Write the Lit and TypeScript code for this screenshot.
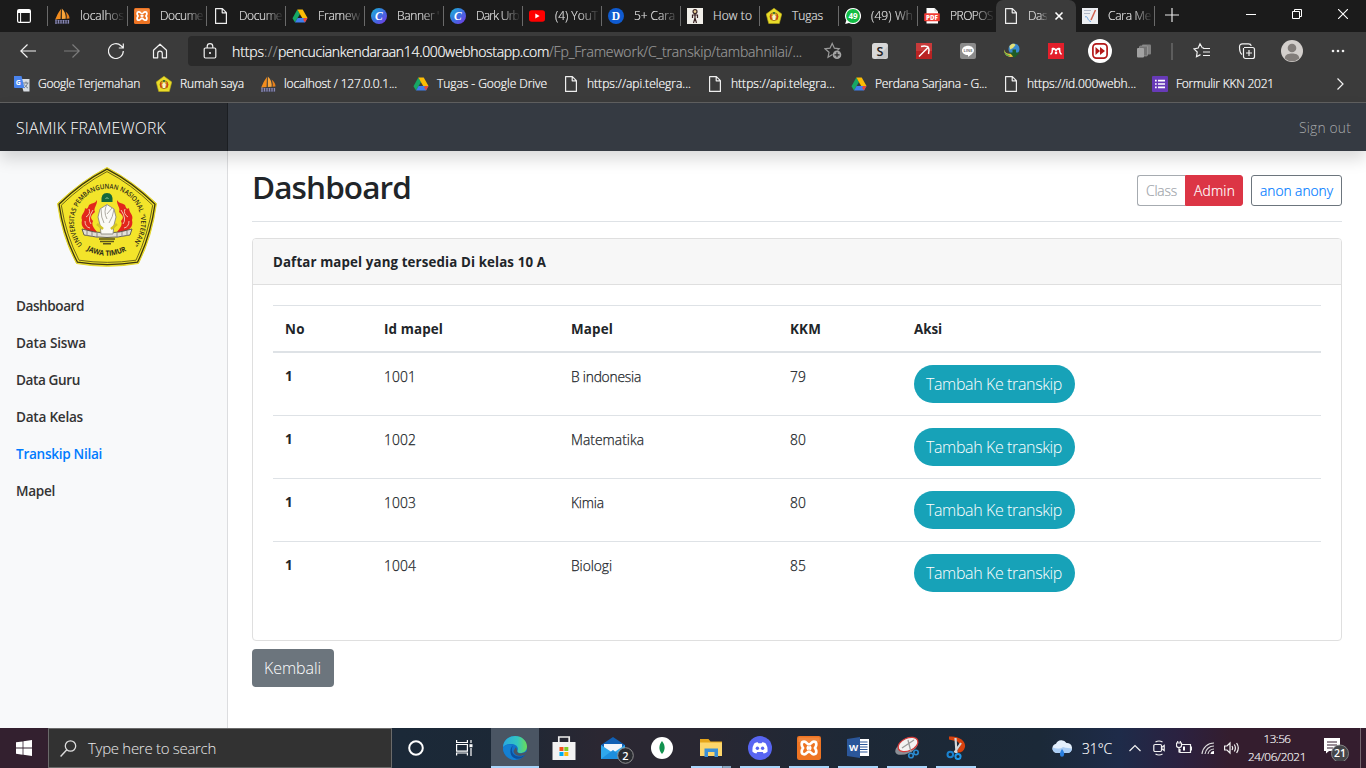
import { LitElement, html, svg, css, TemplateResult } from "lit";
import { customElement } from "lit/decorators.js";

/** Text run whose tracking is computed so that it fills `w` pixels. */
const t = (text: string, w: number, cls = "") =>
  html`<span class="fit ${cls}" data-w=${w}>${text}</span>`;

const ic = (w: number, h: number, body: unknown, cls = "") =>
  html`<svg class="ic ${cls}" width=${w} height=${h} viewBox="0 0 ${w} ${h}">${body}</svg>`;

const sails = () => ic(16, 16, svg`
  <path d="M7 1 6.600 11 1.200 11.500C2.800 8 4 4.500 7 1Z" fill="#f28c1e"/><path d="M7.800 .500C11 3.500 12 7 11.700 10.800L7.800 11Z" fill="#f9a53a"/>
  <path d="M11.500 3.500C14.500 6 15.500 8 15.500 10.500L12.500 10.800C13 8 12.600 6 11.500 3.500Z" fill="#e8801a"/>
  <path d="M1 12.800H15M1 15H15" stroke="#55557f" stroke-width="1.100"/><path d="M2 11.600V16M4.500 12V15.500M7 12V15.500M9.500 12V15.500M12 12V15.500M14.500 12V15.500" stroke="#8a8ab5" stroke-width="1.200"/>`);
const xamppAt = (s: number) => html`<svg class="ic" width=${s} height=${s} viewBox="0 0 16 16">
  <rect width="16" height="16" rx="1.500" fill="#ee7423"/><path d="M1 1H15V4H1Z" fill="#f79a55" opacity=".5"/>
  <path d="M4.800 3.800C6.500 3.800 6.500 5.600 8 5.600S9.500 3.800 11.200 3.800C13.300 3.800 13.300 6.200 12 8C13.300 9.800 13.300 12.200 11.200 12.200C9.500 12.200 9.500 10.400 8 10.400S6.500 12.200 4.800 12.200C2.700 12.200 2.700 9.800 4 8C2.700 6.200 2.700 3.800 4.800 3.800Z" fill="none" stroke="#fff" stroke-width="1.800"/>
  <path d="M6.600 7 9.400 9M9.400 7 6.600 9" stroke="#fff" stroke-width="1.500"/></svg>`;
const xampp = () => xamppAt(16);
const page = () => ic(16, 16, svg`<path d="M2.600.600H9.400L13.400 4.600V15.400H2.600ZM9.200.600V4.800H13.400" fill="none" stroke="#eee" stroke-width="1.200" stroke-linejoin="round"/>`);
const drive = () => ic(16, 16, svg`<path d="M5.300 1.500 8 6 3 14.500 .500 10.200Z" fill="#16a765"/><path d="M5.300 1.500H10.700L15.500 10H10.200Z" fill="#fbbc05"/><path d="M5.600 10H15.500L13 14.500H3Z" fill="#3f7eed"/><path d="M12.500 10H15.500L13 14.500 11 11.500Z" fill="#e8453c"/>`);
const dee = () => ic(16, 16, svg`<circle cx="8" cy="8" r="8" fill="#0f5bd0"/><text x="8" y="11.800" text-anchor="middle" font-family="Liberation Serif, serif" font-weight="700" font-size="11.500" fill="#fff">D</text>`);
const canva = () => ic(16, 16, svg`<circle cx="8" cy="8" r="8" fill="url(#cg)"/><defs><linearGradient id="cg" x1="0" y1="0" x2="1" y2="1"><stop offset="0" stop-color="#18b9d8"/><stop offset=".5" stop-color="#3d6fe0"/><stop offset="1" stop-color="#7a34e6"/></linearGradient></defs><text x="7.800" y="12" text-anchor="middle" font-family="Liberation Serif, serif" font-style="italic" font-weight="700" font-size="11.500" fill="#fff">C</text>`);
const youtube = () => ic(16, 16, svg`<rect y="2.300" width="16" height="11.500" rx="2.800" fill="#f00"/><path d="M6.300 5.500 10.600 8 6.300 10.500Z" fill="#fff"/>`);
const stick = () => ic(16, 16, svg`<rect width="16" height="16" fill="#f1efe9"/><circle cx="8" cy="3.600" r="2" fill="#f1d79a" stroke="#3a2424" stroke-width="1.200"/><path d="M8 6V10L6.500 15M8 10 9.500 15M5.500 10V7H10.500V10" fill="none" stroke="#3a2424" stroke-width="1.200"/>`);
const crest = () => ic(16, 16, svg`<path d="M8 .300 15.800 6 13.300 15.500H2.700L.200 6Z" fill="#e9dc2a" stroke="#b8a915" stroke-width=".6"/><circle cx="8" cy="8.600" r="4" fill="#d9b62a" stroke="#a8761c" stroke-width="1"/><path d="M5.200 6.500Q3.800 9 5.500 11.500M10.800 6.500Q12.200 9 10.500 11.500" fill="none" stroke="#d03c1c" stroke-width="1.500"/><path d="M8 6 9.700 8.500 9 12H7L6.300 8.500Z" fill="#f6efd6"/><circle cx="8" cy="5" r="1" fill="#186b3c"/>`);
const whats = () => ic(16, 16, svg`<path d="M8 0A8 8 0 1 1 4 14.900L.200 15.900 1.300 12.300A8 8 0 0 1 8 0Z" fill="#fff"/><circle cx="8" cy="8" r="6.900" fill="#12bd45"/><text x="8" y="11" text-anchor="middle" font-family="Open Sans, sans-serif" font-weight="700" font-size="8" fill="#fff">49</text>`);
const pdf = () => ic(16, 16, svg`<path d="M2.500 0H10.500L14 3.500V15.500H2.500Z" fill="#fff"/><path d="M10.500 0V3.500H14" fill="#d0d0d0"/><rect x=".200" y="5.200" width="15.600" height="8" rx=".8" fill="#f23c34"/><text x="8" y="11.500" text-anchor="middle" font-family="Open Sans, sans-serif" font-weight="800" font-size="6.200" fill="#fff">PDF</text>`);
const note = () => ic(16, 16, svg`<rect width="16" height="16" fill="#eceef2"/><path d="M2 2.500H9M2 5.500H8" stroke="#b0b7c6"/><path d="M13.500 2 9 12" stroke="#d0604e" stroke-width="1.500"/><path d="M3 9C6 7 5 13 9 13.500" stroke="#6aa2dc" fill="none"/>`);
const translate = () => ic(16, 16, svg`<path d="M6 3H15.500V15.500H9.500Z" fill="#d9dde3"/><path d="M9 7H14.500M12 5.500V7M13.500 7C13 9.500 11.500 11 10 12M10.500 8.500C11.500 10.500 12.500 11.300 14 12" stroke="#6b7686" fill="none" stroke-width=".9"/><path d="M0 0H7.500L10.500 12H1A1 1 0 0 1 0 11Z" fill="#4a84ee"/><text x="4.400" y="8.800" text-anchor="middle" font-family="Open Sans, sans-serif" font-weight="700" font-size="7" fill="#fff">G</text>`);
const forms = () => ic(16, 16, svg`<rect width="16" height="16" rx="1" fill="#673ab7"/><path d="M3 4.700H4.700M3 8H4.700M3 11.300H4.700M6 4.700H13M6 8H13M6 11.300H13" stroke="#fff" stroke-width="1.700"/>`);

type Tab = [() => TemplateResult, string, number];
const TABS: Tab[] = [
  [sails, "localhos", 44], [xampp, "Docume", 43], [page, "Docume", 43],
  [drive, "Framew", 42], [canva, "Banner '", 42], [canva, "Dark Urb", 43], [youtube, "(4) YouT", 43],
  [dee, "5+ Cara", 41], [stick, "How to", 39], [crest, "Tugas", 31],
  [whats, "(49) Wh", 42], [pdf, "PROPOS", 43],
];
const MARKS: Tab[] = [
  [translate, "Google Terjemahan", 102], [crest, "Rumah saya", 64], [sails, "localhost / 127.0.0.1...", 113],
  [drive, "Tugas - Google Drive", 110], [page, "https://api.telegra...", 104], [page, "https://api.telegra...", 104],
  [drive, "Perdana Sarjana - G...", 112], [page, "https://id.000webh...", 109], [forms, "Formulir KKN 2021", 98],
];

@customElement("app-root")
export class AppRoot extends LitElement {
  static styles = css`
    :host { display: flex; flex-direction: column; width: 1366px; height: 768px; overflow: hidden; background: #fff;
      font-family: "Open Sans", "Noto Sans", sans-serif; font-size: 13.800px; font-weight: 300; color: #212529; }
    * { box-sizing: border-box; }
    svg { display: block; flex: none; }
    .fit { display: inline-block; white-space: pre; }
    .ln { fill: none; stroke: #f2f2f2; stroke-width: 1.200; }

    .tabs { display: flex; height: 32px; background: #1b1b1b; color: #e4e4e4; font-size: 12px; flex: none; -webkit-text-stroke: .15px; }
    .tabmenu { width: 47px; padding: 9px 0 0 17px; flex: none; }
    .tab { width: 79px; height: 32px; display: flex; align-items: center; padding-left: 7px; position: relative; flex: none; }
    .tabmenu + .tab { width: 80px; }
    .tab::before { content: ""; position: absolute; left: 0; top: 6px; width: 1px; height: 20px; background: #6a6a6a; }
    .tab .lbl { margin-left: 10px; width: 45px; white-space: nowrap; line-height: 18px;
      -webkit-mask-image: linear-gradient(90deg, #000 55%, transparent 100%); mask-image: linear-gradient(90deg, #000 55%, transparent 100%); }
    .tab.clear .lbl { -webkit-mask-image: none; mask-image: none; }
    .tab.on { width: 80px; background: #3b3b3b; border-radius: 7px 7px 0 0; }
    .tab.on::before, .tab.nx::before { display: none; }
    .tab.on .lbl { width: 20px; margin-left: 9px; }
    .tab.on .x { margin-left: 6px; }
    .tab.nx { width: 78px; padding-left: 6px; }
    .winbtns { margin-left: auto; display: flex; align-items: center; gap: 36px; padding: 0 18px 4px 0; }
    .plus { padding: 2px 0 0 10px; border-left: 1px solid #6a6a6a; height: 20px; margin-top: 6px; }

    .bar { display: flex; align-items: center; height: 38px; background: #3b3b3b; flex: none; }
    .navs { display: grid; grid-template-columns: repeat(4, 44px); width: 188px; padding-left: 6px; justify-items: center; }
    .addr { display: flex; align-items: center; width: 664px; height: 30px; background: #2a2a2a; border-radius: 4px; padding-left: 15px; font-size: 14px; color: #fff; flex: none; }
    .addr .host { margin-left: 15px; white-space: nowrap; font-size: 0; }
    .addr .fit { font-size: 14px; -webkit-text-stroke: .2px; }
    .addr .dim { color: #999; }
    .addr .star { margin-left: auto; margin-right: 10px; }
    .exts { display: grid; grid-template-columns: repeat(7, 44px); margin-left: 6px; justify-items: center; align-items: center; }
    .sep { width: 2px; height: 17px; background: #5d5d5d; margin-left: 5px; }
    .tools { display: grid; grid-template-columns: 44px 45px 46px 46px; margin-left: 7px; justify-items: center; align-items: center; }

    .marks { display: grid; grid-template-columns: 142px 104px 153px 150px 144px 144px 152px 149px 181px auto; align-items: center;
      height: 33px; padding: 0 0 5px 14px; background: #3b3b3b; border-bottom: 1px solid #606060; color: #fff; font-size: 12px; flex: none; -webkit-text-stroke: .2px; }
    .mark { display: flex; align-items: center; gap: 8px; height: 20px; }
    .mark .fit { line-height: 16px; margin-top: 1px; }

    .navbar { display: flex; height: 48px; flex: none; position: relative; background: #353a42; box-shadow: 0 8px 16px rgba(0,0,0,.15); }
    .brand { width: 228px; padding: 13px 16px 0; background: #272a2f; border-right: 1px solid #1b1e22; color: #fff; font-size: 15.800px; line-height: 25px; }
    .out { margin-left: auto; padding: 14px 15px 0 0; color: #a8aaad; line-height: 21px; }

    .body { display: flex; height: 577px; flex: none; }
    .side { width: 228px; background: #f8f9fa; border-right: 1px solid #dcdddf; padding-top: 16px; }
    .logo { margin-left: 57px; margin-bottom: 20px; }
    .item { height: 37px; padding: 8px 16px; line-height: 21px; font-weight: 600; color: #333; font-size: 13.600px; }
    .item.act { color: #007bff; }
    .main { width: 1138px; padding: 16px 24px 0; }
    .top { display: flex; align-items: flex-start; height: 55px; border-bottom: 1px solid #dee2e6; }
    h1 { margin: 0; font-size: 31.500px; line-height: 39px; font-weight: 600; }
    .grp { display: flex; margin: 8px 0 0 auto; }
    .b { height: 31px; border: 1px solid #6c757d; border-radius: 3px; line-height: 30px; padding: 0 8px; background: #fff; -webkit-text-stroke: .2px; }
    .cls { width: 48px; border-color: #a6abb0; border-right: 0; border-radius: 3px 0 0 3px; color: #a0a5ab; }
    .adm { width: 58px; background: #dc3545; border-color: #dc3545; border-radius: 0 3px 3px 0; color: #fff; }
    .anon { width: 91px; margin-left: 8px; color: #007bff; }
    .card { margin-top: 16px; height: 403px; border: 1px solid #dfdfdf; border-radius: 4px; overflow: hidden; }
    .chead { height: 46px; background: #f7f7f7; border-bottom: 1px solid #dfdfdf; padding: 13px 20px 11px; line-height: 21px; font-weight: 700; font-size: 13.300px; }
    .tbl { margin: 20px; }
    .row { display: grid; grid-template-columns: 99px 187px 219px 124px auto; padding: 12px 12px; height: 63px; border-top: 1px solid #dee2e6; line-height: 22px; }
    .row.h { height: 48px; border-bottom: 2px solid #dee2e6; font-weight: 700; line-height: 23px; font-size: 13.400px; }
    .row.h + .row { border-top: 0; height: 62px; }
    .row b { font-size: 13.400px; font-weight: 700; }
    .cell { -webkit-text-stroke: .25px; line-height: 23px; }
    .pill { justify-self: start; width: 161px; height: 38px; border-radius: 19px; background: #17a2b8; color: #fff; font-size: 16px; line-height: 39px; padding-left: 12px; }
    .back { width: 82px; height: 38px; margin-top: 8px; border-radius: 4px; background: #6c757d; color: #fff; font-size: 16px; line-height: 39px; padding-left: 12px; }

    .task { display: flex; height: 40px; flex: none; color: #fff;
      background: linear-gradient(90deg, #33202f 0, #33202f 48px, #1b2938 400px, #1c2836 500px, #2b2732 600px, #292732 700px, #1d2836 850px, #1b2938 1040px, #1e2b49 1120px, #2b2140 1180px, #341d2e 1230px, #341d2e 100%); }
    .start { width: 48px; padding: 12px 16px; flex: none; }
    .search { width: 344px; border: 1px solid #6a6a6a; background: #323232; display: flex; align-items: center; padding-left: 11px; gap: 11px; color: #eaeaea; font-size: 15px; flex: none; }
    .sys { display: grid; grid-template-columns: 48px 48px; justify-items: center; align-items: center; width: 99px; flex: none; }
    .apps { display: grid; grid-template-columns: repeat(10, 49px); flex: none; }
    .app { width: 48px; height: 40px; display: flex; align-items: center; justify-content: center; position: relative; }
    .app.run::after { content: ""; position: absolute; left: 4px; bottom: 0; width: 40px; height: 2px; background: #a9d5fb; }
    .app.cur { background: #4a5563; }
    .app.cur::after { left: 0; width: 48px; }
    .app.two::after { background: linear-gradient(90deg, #a9d5fb 31px, #6d8090 31px, #6d8090 32px, #85a5c0 32px); }
    .app .mail { margin-left: 8px; margin-top: 3px; }
    .tray { display: flex; align-items: center; margin-left: 70px; flex: none; }
    .temp { margin-left: 9px; width: 31px; font-size: 13.800px; -webkit-text-stroke: .15px; }
    .ticons { display: grid; grid-template-columns: 24px 24px 25px 24px 24px; width: 121px; margin-left: 10px; justify-items: center; align-items: center; }
    .clock { width: 58px; margin-left: 4px; font-size: 11.700px; line-height: 18px; display: flex; flex-direction: column; align-items: center; padding-bottom: 2px; -webkit-text-stroke: .15px; }
    .notif { margin-left: 18px; }
    .edge { width: 1px; height: 40px; background: #75666f; margin-left: 11px; }
  `;

  firstUpdated() {
    this.renderRoot.querySelectorAll<HTMLElement>(".fit").forEach((el) => {
      const want = Number(el.dataset.w);
      const n = (el.textContent ?? "").length;
      el.style.letterSpacing = `${((want - el.getBoundingClientRect().width) / n).toFixed(3)}px`;
    });
  }

  tabBar() {
    return html`<div class="tabs">
      <div class="tabmenu">${ic(14, 14, svg`<rect x=".6" y=".6" width="12.800" height="12.800" rx="1.500" fill="none" stroke="#fff" stroke-width="1.200"/><path d="M1 1H13V4H1Z" fill="#fff"/><path d="M3.600 4V13" stroke="#fff"/>`)}</div>
      ${TABS.map(([icon, label, w]) => html`<div class="tab ${label === "Tugas" || label === "How to" ? "clear" : ""}">${icon()}<div class="lbl">${t(label, w)}</div></div>`)}
      <div class="tab on">${page()}<div class="lbl">${t("Das", 19)}</div>
        ${ic(10, 10, svg`<path d="M1.500 1.500 8.500 8.500M8.500 1.500 1.500 8.500" stroke="#fff" stroke-width="1.600"/>`, "x")}</div>
      <div class="tab nx">${note()}<div class="lbl">${t("Cara Me", 43)}</div></div>
      <div class="plus">${ic(14, 14, svg`<path d="M7 0V14M0 7H14" stroke="#e8e8e8" stroke-width="1.200"/>`)}</div>
      <div class="winbtns">
        ${ic(10, 10, svg`<path d="M0 5.500H10" stroke="#fff"/>`)}
        ${ic(10, 10, svg`<path d="M.500 2.500H7.500V9.500H.500ZM2.500 2.500V.500H9.500V7.500H7.500" fill="none" stroke="#fff"/>`)}
        ${ic(10, 10, svg`<path d="M0 0 10 10M10 0 0 10" stroke="#fff" stroke-width="1.100"/>`)}
      </div></div>`;
  }

  toolbar() {
    return html`<div class="bar">
      <div class="navs">
        ${ic(16, 16, svg`<path class="ln" d="M16 8H.800M7.500 1.500.800 8 7.500 14.500"/>`)}
        ${ic(16, 16, svg`<path d="M0 8H15.200M8.500 1.500 15.200 8 8.500 14.500" fill="none" stroke="#7c7c7c" stroke-width="1.200"/>`)}
        ${ic(16, 16, svg`<path class="ln" d="M15.300 8A7.400 7.400 0 1 1 13 2.700L15 4.600M15.300 .500V5H10.800"/>`)}
        ${ic(16, 16, svg`<path class="ln" d="M1.500 7.200 8 1.200 14.500 7.200V14.800H10.300V10.500A2.300 2.300 0 0 0 5.700 10.500V14.800H1.500Z" stroke-linejoin="round"/>`)}
      </div>
      <div class="addr">
        ${ic(14, 16, svg`<rect class="ln" x="1.200" y="5" width="11.600" height="10" rx="1.200"/><path class="ln" d="M4.200 5V3.500A2.800 2.800 0 0 1 9.800 3.500V5"/><circle cx="7" cy="10" r="1" fill="#fff"/>`)}
        <span class="host">${t("https", 32)}${t("://", 14, "dim")}${t("pencuciankendaraan14.000webhostapp.com", 271)}${t("/Fp_Framework/C_transkip/tambahnilai/...", 253, "dim")}</span>
        ${ic(18, 18, svg`<path d="M8.500 12.600 4 15.300 5 10.300 1 6.800 6 6.200 8.200 1.500 10.400 6.200 15.200 6.800 13.500 8.400" fill="none" stroke="#999" stroke-width="1.200"/><circle cx="13" cy="12.800" r="4.300" fill="#a5a5a5"/><path d="M13 10.300V15.300M10.500 12.800H15.500" stroke="#2a2a2a" stroke-width="1.200"/>`, "star")}
      </div>
      <div class="exts">
        ${ic(16, 16, svg`<rect width="16" height="16" rx="2.500" fill="#d9d9d9"/><path d="M16 3V14L11 16H4Z" fill="#b9b9b9" opacity=".6"/><text x="8" y="12.500" text-anchor="middle" font-family="Open Sans, sans-serif" font-weight="600" font-size="12.500" fill="#222">S</text>`)}
        ${ic(16, 16, svg`<rect width="16" height="16" fill="#b92323"/><path d="M0 0H16V8H0Z" fill="#d14a4a" opacity=".6"/><path d="M3 13.500 12 4.500M5 3.500C8 2.800 12 3 12.500 4.500C13.300 6 13 9 12.500 11" fill="none" stroke="#fff" stroke-width="1.500"/>`)}
        ${ic(16, 16, svg`<rect width="16" height="16" rx="2" fill="#8b8b8b"/><path d="M8 2.800C11.500 2.800 14 5 14 7.600C14 10.200 10 12.600 8 14V12C4.500 12 2 10.200 2 7.500C2 5 4.500 2.800 8 2.800Z" fill="#fff"/><text x="8" y="9.100" text-anchor="middle" font-family="Open Sans, sans-serif" font-weight="700" font-size="4" fill="#777">LINE</text>`)}
        ${ic(16, 16, svg`<circle cx="10" cy="6" r="5.500" fill="#3a8ad0"/><path d="M5.500 3C8 0 10.500 .500 11.500 2L9 5 6 6.500Z" fill="#e4df75"/><path d="M0 6.500C1 10 4 11.500 7.500 10.500L9.500 13.500C4 15 0 12 0 6.500Z" fill="#e8c13a"/><path d="M.200 6.500C.500 9.500 3 12 6 12L5 13.500C1.500 12.500 0 10 .200 6.500Z" fill="#5bb04a"/><path d="M8.500 6.500H12V9.500H16L10.500 15 5.500 9.500H8.500Z" fill="#1e5c26"/>`)}
        ${ic(16, 16, svg`<rect width="16" height="16" fill="#e31f2b"/><path d="M2.300 11Q4.300 11 4.300 7M13.700 11Q11.700 11 11.700 7M4.500 5.800Q6.500 5 8 7.500Q9.500 5 11.500 5.800" fill="none" stroke="#fff" stroke-width="1.500"/><circle cx="4.800" cy="6" r="1.300" fill="#fff"/><circle cx="11.200" cy="6" r="1.300" fill="#fff"/><circle cx="8" cy="10" r="1.300" fill="#fff"/>`)}
        ${ic(24, 24, svg`<circle cx="12" cy="12" r="12" fill="#fff"/><rect x="4.900" y="4.900" width="14.200" height="14.200" rx="3.500" fill="none" stroke="#b31919" stroke-width="1.700"/><path d="M7.500 8 12 12 7.500 16ZM12 8 17 12 12 16Z" fill="#b31919"/>`)}
        ${ic(16, 16, svg`<rect x="6" y="1.500" width="9" height="10" rx="1" fill="#808080"/><rect x="3.500" y="3" width="8" height="10" rx="1" fill="#727272" stroke="#a5a5a5" stroke-width=".6"/><rect x="1" y="5" width="7" height="9.500" rx="1" fill="#a2a2a2"/>`)}
      </div>
      <div class="sep"></div>
      <div class="tools">
        ${ic(18, 18, svg`<path class="ln" d="M11 6 9.200 5.800 7 1.800 5.200 6 1 6.800 4.200 10 3.500 14.700 7.500 12.600M10 6.500H17M10 10H17M10 13.500H17"/>`)}
        ${ic(18, 18, svg`<path class="ln" d="M4 12.500C2 11 1.500 8 1.500 5C1.500 3 2.500 1.800 4.500 1.800H10.500C12 1.800 13 2.500 13.300 3.800M6 5.500H14.500A2 2 0 0 1 16.500 7.500V14.500A2 2 0 0 1 14.500 16.500H7.500A2 2 0 0 1 5.500 14.500V6M11 8V14M8 11H14"/>`)}
        ${ic(22, 22, svg`<circle cx="11" cy="11" r="11" fill="#d3cfcc"/><circle cx="11" cy="8" r="4.300" fill="#827d7a"/><path d="M3.700 18.500C4 14 8 13.500 11 13.500S18 14 18.300 18.500A11 11 0 0 1 3.700 18.500Z" fill="#827d7a"/>`)}
        ${ic(14, 4, svg`<circle cx="2" cy="2" r="1.300" fill="#eee"/><circle cx="7" cy="2" r="1.300" fill="#eee"/><circle cx="12" cy="2" r="1.300" fill="#eee"/>`)}
      </div></div>
      <div class="marks">${MARKS.map(([icon, label, w]) => html`<div class="mark">${icon()}${t(label, w)}</div>`)}
        ${ic(14, 14, svg`<path class="ln" d="M4.500 1.500 10 7 4.500 12.500"/>`)}</div>`;
  }

  logo() {
    return html`<svg class="logo" width="100" height="100" viewBox="0 0 100 100">
      <path d="M50 .500Q76 14 99.500 36.500Q95 70 81.500 96.500Q50 102 19.500 96.500Q5 70 .500 36.500Q24 14 50 .500Z" fill="#f3e42a" stroke="#e3d52b" stroke-width="1"/>
      <path d="M50 2.200Q75 15 98 37.200Q93.500 69 80.500 95.200Q50 100 20.500 95.200Q6.500 69 2 37.200Q25 15 50 2.200Z" fill="none" stroke="#3b3611" stroke-width="1.300"/>
      <path d="M50 4.600Q74 17 95.700 38.200Q91 68 79 93.200Q50 97.500 22 93.200Q9 68 4.300 38.200Q26 17 50 4.600Z" fill="none" stroke="#5f5818" stroke-width=".9"/>
      <path id="arc" d="M25.500 77.500A33.500 33.500 0 1 1 75.500 77.500" fill="none"/>
      <text font-family="Open Sans, sans-serif" font-weight="600" font-size="6.800" fill="#2f2c18"><textPath href="#arc" textLength="153" lengthAdjust="spacingAndGlyphs">UNIVERSITAS PEMBANGUNAN NASIONAL "VETERAN"</textPath></text>
      <path id="low" d="M29.500 83Q50 94.500 71 83" fill="none"/>
      <text font-family="Open Sans, sans-serif" font-weight="700" font-size="7.300" fill="#2f2c18"><textPath href="#low" textLength="42" lengthAdjust="spacingAndGlyphs">JAWA TIMUR</textPath></text>
      <path d="M40 65C29 66 23 60 25 53C23 48 28 46 28 41C30 43 31 41 32 38C34 36 38 37 40 33C40.500 38 36 41 38 45C35 48 32 50 36 54C34 58 37 61 40 65ZM60 65C71 66 77 60 75 53C77 48 72 46 72 41C70 43 69 41 68 38C66 36 62 37 60 33C59.500 38 64 41 62 45C65 48 68 50 64 54C66 58 63 61 60 65Z" fill="#e2261c"/>
      <path d="M32 42Q34 47 29 50M36 43Q30 52 34 57M28 54Q28 60 33 61M68 42Q66 47 71 50M64 43Q70 52 66 57M72 54Q72 60 67 61" fill="none" stroke="#f6d5b8" stroke-width=".9"/>
      <path d="M44.500 35Q43.500 26 50 26Q56.500 26 55.500 35Z" fill="#15683c"/><path d="M48.500 32Q50 29 51.500 32" fill="none" stroke="#9ccfa6"/>
      <path d="M25 62Q50 70 75 62L73 68Q50 73 27 68Z" fill="#e2dfd8" stroke="#55524c" stroke-width=".9"/>
      <path d="M30 64V69M35 65V70M40 66V71M60 66V71M65 65V70M70 64V69" stroke="#8d8982" stroke-width="1"/>
      <path d="M44 67L43 58 41 50 43 42 50 37.500 57 42 59 50 57 58 56 67Z" fill="#fbfaf6" stroke="#8b8880" stroke-width=".9"/>
      <path d="M50 37Q46 45 50 52M44 42Q44 51 47 56M57 42Q56 50 52 56M50 47 55 41" fill="none" stroke="#a5a299" stroke-width=".9"/>
      <path d="M40 57 46 62M60 57 54 62" stroke="#d1c326" stroke-width="2.600"/>
      <path d="M42 72H58M43 74.500H57M46 76.800H54" stroke="#5b541d" stroke-width="1.400"/>
    </svg>`;
  }

  content() {
    const nav: [string, number][] = [["Dashboard", 68], ["Data Siswa", 70], ["Data Guru", 64], ["Data Kelas", 67], ["Transkip Nilai", 86], ["Mapel", 39]];
    const rows: [string, string, number, string][] = [["1001", "B indonesia", 70, "79"], ["1002", "Matematika", 73, "80"], ["1003", "Kimia", 33, "80"], ["1004", "Biologi", 41, "85"]];
    return html`<div class="navbar"><div class="brand">${t("SIAMIK FRAMEWORK", 150)}</div><div class="out">${t("Sign out", 52)}</div></div>
      <div class="body">
        <div class="side">${this.logo()}${nav.map(([n, w]) => html`<div class="item ${n === "Transkip Nilai" ? "act" : ""}">${t(n, w)}</div>`)}</div>
        <div class="main">
          <div class="top"><h1>${t("Dashboard", 159)}</h1>
            <div class="grp"><div class="b cls">${t("Class", 31)}</div><div class="b adm">${t("Admin", 41)}</div><div class="b anon">${t("anon anony", 73)}</div></div></div>
          <div class="card"><div class="chead">${t("Daftar mapel yang tersedia Di kelas 10 A", 273)}</div>
            <div class="tbl">
              <div class="row h"><div>${t("No", 20)}</div><div>${t("Id mapel", 59)}</div><div>${t("Mapel", 42)}</div><div>${t("KKM", 31)}</div><div>${t("Aksi", 28)}</div></div>
              ${rows.map(([id, name, w, kkm]) => html`<div class="row"><b>1</b><div class="cell">${t(id, 32)}</div><div class="cell">${t(name, w)}</div><div class="cell">${t(kkm, 16)}</div><div class="pill">${t("Tambah Ke transkip", 136)}</div></div>`)}
            </div></div>
          <div class="back">${t("Kembali", 57)}</div>
        </div></div>`;
  }

  taskbar() {
    return html`<div class="task">
      <div class="start">${ic(16, 16, svg`<path d="M0 2.300 6.600 1.400V7.600H0ZM7.400 1.300 16 0V7.600H7.400ZM0 8.400H6.600V14.700L0 13.700ZM7.400 8.400H16V16L7.400 14.800Z" fill="#fff"/>`)}</div>
      <div class="search">${ic(17, 17, svg`<circle cx="10.500" cy="6" r="5.200" fill="none" stroke="#ddd" stroke-width="1.300"/><path d="M6.800 9.800.600 16.400" stroke="#ddd" stroke-width="1.400"/>`)}${t("Type here to search", 128)}</div>
      <div class="sys">
        ${ic(16, 16, svg`<circle cx="8" cy="8" r="6.800" fill="none" stroke="#fff" stroke-width="2"/>`)}
        ${ic(17, 16, svg`<path d="M.600 0V2.500H11.400V0M.600 15.500V13H11.400V15.500M.600 4.500H11.400V11.200H.600ZM15 0V3M15 8V16" fill="none" stroke="#fff" stroke-width="1.200"/><rect x="13.500" y="4.200" width="3" height="3" fill="#fff"/>`)}
      </div>
      <div class="apps">
        <div class="app run cur">${ic(24, 24, svg`<defs><linearGradient id="e1"><stop offset="0" stop-color="#2aa8e0"/><stop offset=".6" stop-color="#33c6c0"/><stop offset="1" stop-color="#6bdc55"/></linearGradient></defs>
          <circle cx="12" cy="12" r="12" fill="#1173cc"/><path d="M0 11C.500 4 6 0 12 0C19 0 24 5 24 10.500C24 15 20.500 17 17.500 17C15 17 13.800 16 14.300 15C16 12.500 14 8.500 9.500 8C5 7.500 1.500 9 0 11Z" fill="url(#e1)"/><path d="M9 9.500C5.500 14 8 21 14 23.800C7 25 0 19 0 12C2 8.500 6 7.500 9 9.500Z" fill="#1480d2"/><path d="M10 10C7 14 9.500 20 15.500 20.500C18.500 20.800 21 19.800 22.500 18C19 25.500 7 24 7.500 15C7.600 12.500 8.500 11 10 10Z" fill="#0c4f9d"/><path d="M14.300 15C13.800 17 17 18 20 17L24 15.500 22.500 18.500C17 21.500 11 19.500 10.500 15L13 11Z" fill="#4a5563"/>`)}</div>
        <div class="app">${ic(24, 24, svg`<path d="M6.800 6V1H17.200V6" fill="none" stroke="#eee" stroke-width="1.700"/><path d="M.500 6H23.500V24H.500Z" fill="#f3f3f3"/><rect x="7.500" y="11" width="4" height="4" fill="#f1511b"/><rect x="12.300" y="11" width="4" height="4" fill="#80cc28"/><rect x="7.500" y="16" width="4" height="4" fill="#00adef"/><rect x="12.300" y="16" width="4" height="4" fill="#fbbc09"/>`)}</div>
        <div class="app">${ic(34, 28, svg`<path d="M1 9 13 1 25 9V23H1Z" fill="#1160b5"/><path d="M4 8H22V16H4Z" fill="#f3f6fb"/><path d="M1 9 13 17 25 9V23H1Z" fill="#2fa8ec"/><path d="M1 23 13 14 25 23Z" fill="#1d8fdd"/><circle cx="25.500" cy="19.500" r="7.800" fill="#2a2c31" stroke="#9a9a9a" stroke-width=".9"/><text x="25.500" y="23.500" text-anchor="middle" font-family="Open Sans, sans-serif" font-weight="600" font-size="11" fill="#fff">2</text>`, "mail")}</div>
        <div class="app">${ic(22, 22, svg`<circle cx="11" cy="11" r="11" fill="#fff"/><path d="M11 4C14.500 8.500 14.500 13 11 17C7.500 13 7.500 8.500 11 4Z" fill="#12924f"/>`)}</div>
        <div class="app run two">${ic(22, 20, svg`<path d="M0 1H8.500L10.500 3.500H22V18H0Z" fill="#e6a51b"/><path d="M0 4.500H22V18H0Z" fill="#fdd66b"/><path d="M4.500 10.500H18V19H14.500V14H8V19H4.500Z" fill="#3b8fd6"/>`)}</div>
        <div class="app run">${ic(24, 24, svg`<circle cx="12" cy="12" r="12" fill="#5865f2"/><path d="M6.200 7.500Q8 6.300 9.800 6.200L10.400 7.200H13.600L14.200 6.200Q16 6.300 17.800 7.500Q20 11 19.500 15.800Q17.500 17.300 15.600 17.500L14.800 16H9.200L8.400 17.500Q6.500 17.300 4.500 15.800Q4 11 6.200 7.500Z" fill="#fff"/><circle cx="9.400" cy="12.200" r="1.700" fill="#5865f2"/><circle cx="14.600" cy="12.200" r="1.700" fill="#5865f2"/>`)}</div>
        <div class="app run">${xamppAt(24)}</div>
        <div class="app run">${ic(24, 24, svg`<path d="M11 3H23V20H11Z" fill="#fff"/><path d="M14 6H21.500M14 8.500H21.500M14 11H21.500M14 13.500H21.500M14 16H21.500" stroke="#2b579a" stroke-width="1.200"/><path d="M1 3 14 1V22L1 20Z" fill="#2b579a"/><text x="7.500" y="15.200" text-anchor="middle" font-family="Open Sans, sans-serif" font-weight="700" font-size="9.500" fill="#fff">W</text>`)}</div>
        <div class="app run">${ic(26, 24, svg`<ellipse cx="12.500" cy="11.500" rx="12" ry="6" transform="rotate(-24 12.500 11.500)" fill="#8b8f96"/><ellipse cx="14" cy="8.500" rx="10.500" ry="6.300" transform="rotate(-24 14 8.500)" fill="#f2f2f2" stroke="#d63b3b" stroke-width="1.300"/><path d="M8 12 20 4M14 4 17 16" stroke="#9b9b9b" stroke-width="1.300"/><circle cx="17" cy="19.500" r="2.300" fill="none" stroke="#2b8bd0" stroke-width="1.600"/><circle cx="22" cy="16.500" r="2.200" fill="none" stroke="#2b8bd0" stroke-width="1.600"/>`)}</div>
        <div class="app run">${ic(20, 24, svg`<path d="M3 .500C13 -.500 20 5 19 11C18 15 15 17 11.500 16.500V13C14.500 12 14.500 8 11.500 5.500L3 3.500Z" fill="#d8420e"/><path d="M9.500 2 10.500 17M15 7 8.500 16.500" stroke="#d5d7d9" stroke-width="2.200"/><circle cx="4.300" cy="18.500" r="2.800" fill="none" stroke="#1b82cf" stroke-width="2"/><circle cx="12" cy="20.500" r="2.600" fill="none" stroke="#2197e5" stroke-width="2"/>`)}</div>
      </div>
      <div class="tray">
        ${ic(22, 18, svg`<path d="M5.500 14A4.700 4.700 0 0 1 5 4.800A6 6 0 0 1 15.500 4A5 5 0 0 1 16.500 14Z" fill="#e4f0fd"/><path d="M5.500 14A4.700 4.700 0 0 1 1.500 8.500C6 10.500 10 9.500 12 8C15 9.500 19 8.500 21 10C20.500 12.500 19 14 16.500 14Z" fill="#aacdf5"/><path d="M11 10Q14 14 13 15.800A2 2 0 0 1 9 15.800Q8.500 14 11 10Z" fill="#2a7fe0"/>`)}
        <div class="temp">${t("31°C", 30)}</div>
        <div class="ticons">
          ${ic(12, 8, svg`<path class="ln" d="M.500 7 6 1.500 11.500 7"/>`)}
          ${ic(12, 16, svg`<rect class="ln" x=".8" y="4.500" width="7.700" height="7" rx="1.200"/><path class="ln" d="M8.500 7.500 11.200 5.500V10.500L8.500 8.500M2.500 2Q6 0 9.500 2M2.500 14Q6 16 9.500 14"/>`)}
          ${ic(16, 14, svg`<path class="ln" d="M6 3.500H14.500V11.500H4V8M14.500 6H15.500V9H14.500M.500 2H5.500V4.500Q5.500 6.500 3 6.500T.500 4.500ZM1.700 0V2M4.300 0V2M3 6.500V11.500"/><path d="M7 5.500H9V9.500H7Z" fill="#fff"/>`)}
          ${ic(14, 14, svg`<path d="M1 13A12 12 0 0 1 13 2M4 13A9 9 0 0 1 13 5M7 13A6 6 0 0 1 13 8" fill="none" stroke="#ddd" stroke-width="1.100"/><path d="M9.500 13A3.500 3.500 0 0 1 13 10V13Z" fill="#fff"/>`)}
          ${ic(16, 14, svg`<path class="ln" d="M.600 5H3L6 2V12L3 9H.600ZM8 5Q9.300 7 8 9M10.300 3.500Q12.500 7 10.300 10.500M12.600 2Q16 7 12.600 12"/>`)}
        </div>
        <div class="clock">${t("13:56", 27)}${t("24/06/2021", 58)}</div>
        ${ic(25, 26, svg`<path d="M0 3H16V16H5L2 18.500V16H0Z" fill="#fff"/><path d="M3 7H13M3 10H13M3 13H9" stroke="#341d2e"/><circle cx="16" cy="18.500" r="8.500" fill="#45464a" stroke="#8a8a8a" stroke-width=".9"/><text x="16" y="22.300" text-anchor="middle" font-family="Open Sans, sans-serif" font-weight="600" font-size="10.500" fill="#fff">21</text>`, "notif")}
        <div class="edge"></div>
      </div></div>`;
  }

  render() {
    return html`${this.tabBar()}${this.toolbar()}${this.content()}${this.taskbar()}`;
  }
}
